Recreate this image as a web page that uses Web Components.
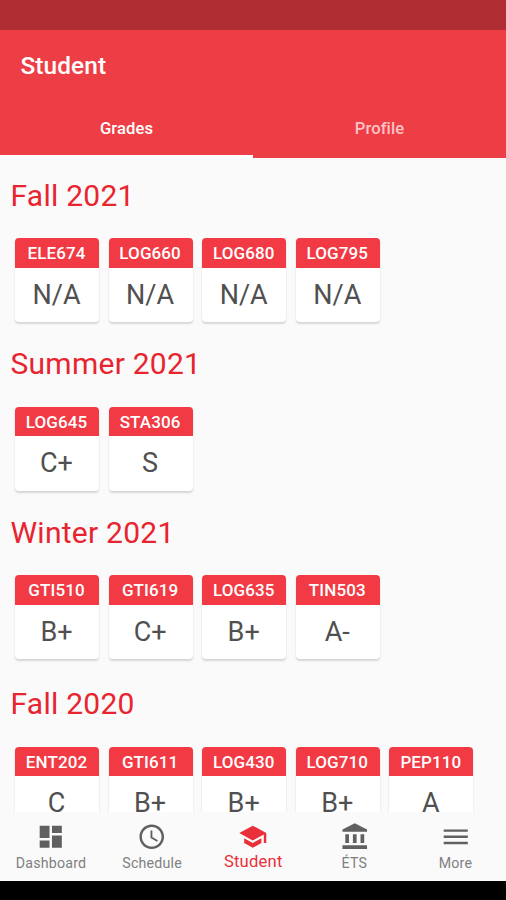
<!DOCTYPE html>
<html lang="en">
<head>
<meta charset="utf-8">
<title>Student</title>
<style>
html,body{margin:0;height:100%;overflow:hidden}
body{font-family:Roboto,"Liberation Sans",sans-serif;background:#fafafa}
</style>
</head>
<body>
<student-app></student-app>
<script>
const define = (name, html, setup) => customElements.define(name, class extends HTMLElement {
  constructor() {
    super();
    this.attachShadow({mode: 'open'});
  }
  connectedCallback() {
    this.shadowRoot.innerHTML = html;
    if (setup) setup(this, this.shadowRoot);
  }
});

define('app-header', `<style>
:host{display:flex;flex-direction:column;height:157.5px;background:#ee3e45;color:#fff;flex:none}
.status{height:30px;background:#b02d34}
h1{margin:0;height:71px;line-height:71px;padding-left:20.5px;font-size:24.4px;font-weight:500;letter-spacing:.1px}
.tabs{display:grid;grid-template-columns:1fr 1fr;flex:1}
</style><div class="status"></div><h1><slot name="title"></slot></h1><div class="tabs"><slot></slot></div>`);

define('app-tab', `<style>
:host{display:block;box-sizing:border-box;height:56.5px;line-height:55px;text-align:center;font-size:16.6px;font-weight:500;letter-spacing:.1px;color:#fcc3c6}
:host([active]){color:#fff;border-bottom:3px solid #fff}
</style><slot></slot>`);

define('grade-card', `<style>
:host{display:flex;flex-direction:column;width:84px;height:84px;border-radius:4px;overflow:hidden;background:#fff;box-shadow:0 1.5px 2px rgba(0,0,0,.14),0 0 1px rgba(0,0,0,.04);text-align:center}
.code{height:29.5px;line-height:30px;background:#f13a44;color:#fff;font-size:17px;font-weight:500;letter-spacing:.1px;padding-right:1px}
.grade{flex:1;line-height:54px;font-size:27px;color:#505050;padding-right:1px}
</style><div class="code"></div><div class="grade"><slot></slot></div>`, (el, root) => {
  root.querySelector('.code').textContent = el.getAttribute('code');
});

define('grade-session', `<style>
:host{display:block;height:var(--h,168.7px);flex:none}
h2{margin:0;height:80.5px;line-height:75px;padding-left:10.5px;font-size:30px;font-weight:400;letter-spacing:.25px;color:#e8242f}
.cards{display:flex;gap:9.6px;padding-left:15px}
</style><h2></h2><div class="cards"><slot></slot></div>`, (el, root) => {
  root.querySelector('h2').textContent = el.getAttribute('name');
});

const icons = {
  dashboard: 'M3 13h8V3H3v10zm0 8h8v-6H3v6zm10 0h8V11h-8v10zm0-18v6h8V3h-8z',
  schedule: 'M11.99 2C6.47 2 2 6.48 2 12s4.47 10 9.99 10C17.52 22 22 17.52 22 12S17.52 2 11.99 2zM12 20c-4.42 0-8-3.58-8-8s3.58-8 8-8 8 3.58 8 8-3.58 8-8 8zm.5-13H11v6l5.25 3.15.75-1.23-4.5-2.67z',
  school: 'M5 13.18v4L12 21l7-3.82v-4L12 17l-7-3.82zM12 3L1 9l11 6 9-4.91V17h2V9L12 3z',
  bank: 'M4.3 10v7h3v-7h-3zm6.2 0v7h3v-7h-3zM2 22h20v-3H2v3zm14.7-12v7h3v-7h-3zM12 1L2 6v2h20V6L12 1z',
  menu: 'M2.2 18h19.6v-2H2.2v2zm0-5h19.6v-2H2.2v2zm0-7v2h19.6V6H2.2z'
};
define('nav-item', `<style>
:host{display:flex;flex-direction:column;align-items:center;color:#606060;font-size:14.2px;letter-spacing:.2px}
svg{width:29.5px;height:29.5px;margin-top:9.5px;fill:currentColor}
span{line-height:20px;margin-top:2px;color:#808080}
:host([active]){color:#e92f39;font-size:16.6px}
:host([active]) span{color:#e92f39;margin-top:1px}
</style><svg viewBox="0 0 24 24"><path/></svg><span><slot></slot></span>`, (el, root) => {
  root.querySelector('path').setAttribute('d', icons[el.getAttribute('icon')]);
});

define('bottom-nav', `<style>
:host{display:grid;grid-template-columns:repeat(5,1fr);height:69px;padding-left:.5px;background:#fafafa;flex:none}
</style><slot></slot>`);

define('student-app', `<style>
:host{display:flex;flex-direction:column;width:506px;height:900px;background:#fafafa}
main{flex:1;min-height:0;overflow:hidden}
bottom-nav{box-sizing:border-box}
footer{height:19px;background:#000;flex:none}
</style>
<app-header><span slot="title">Student</span><app-tab active>Grades</app-tab><app-tab>Profile</app-tab></app-header>
<main></main>
<bottom-nav>
<nav-item icon="dashboard">Dashboard</nav-item><nav-item icon="schedule">Schedule</nav-item><nav-item icon="school" active>Student</nav-item><nav-item icon="bank">ÉTS</nav-item><nav-item icon="menu">More</nav-item>
</bottom-nav><footer></footer>`, (el, root) => {
  const sessions = [
    ['Fall 2021', 168.7, {ELE674: 'N/A', LOG660: 'N/A', LOG680: 'N/A', LOG795: 'N/A'}],
    ['Summer 2021', 168.6, {LOG645: 'C+', STA306: 'S'}],
    ['Winter 2021', 171.4, {GTI510: 'B+', GTI619: 'C+', LOG635: 'B+', TIN503: 'A-'}],
    ['Fall 2020', 171, {ENT202: 'C', GTI611: 'B+', LOG430: 'B+', LOG710: 'B+', PEP110: 'A'}]
  ];
  root.querySelector('main').innerHTML = sessions.map(([name, h, grades]) =>
    `<grade-session name="${name}" style="--h:${h}px">` +
    Object.entries(grades).map(([c, g]) => `<grade-card code="${c}">${g}</grade-card>`).join('') +
    '</grade-session>').join('');
});
</script>
</body>
</html>
